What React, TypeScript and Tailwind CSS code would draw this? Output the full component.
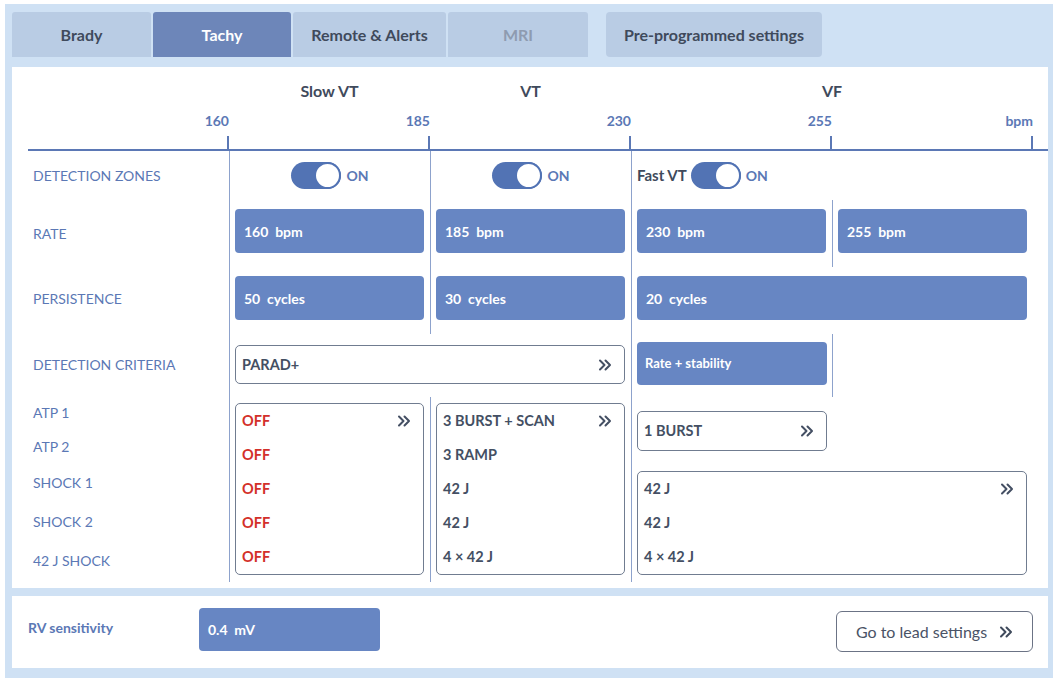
import type { ReactNode } from 'react';

const font = { fontFamily: 'Lato, "Noto Sans", "Liberation Sans", sans-serif' };

function Chevrons({ className = '' }: { className?: string }) {
  return (
    <svg viewBox="0 0 14 12" className={`h-[12px] w-[14px] ${className}`} fill="none" stroke="currentColor" strokeWidth="2" strokeLinecap="round" strokeLinejoin="round">
      <path d="M2 1.5 L6.5 6 L2 10.5" />
      <path d="M7.5 1.5 L12 6 L7.5 10.5" />
    </svg>
  );
}

function Toggle() {
  return (
    <div className="flex items-center gap-[5px]">
      <div className="relative h-[27px] w-[50px] rounded-full bg-[#5273b4]">
        <div className="absolute right-0 top-0 h-[27px] w-[27px] rounded-full border-2 border-[#5273b4] bg-white" />
      </div>
      <span className="text-[14px] font-bold text-[#5b78b5]">ON</span>
    </div>
  );
}

function Filled({ children, small }: { children: ReactNode; small?: boolean }) {
  return (
    <div className={`flex h-[44px] items-center rounded-[4px] bg-[#6786c3] pl-[9px] font-bold text-white ${small ? 'text-[13px]' : 'text-[14px]'}`}>
      {children}
    </div>
  );
}

function OutlineList({ rows, red, chevron = true }: { rows: string[]; red?: boolean; chevron?: boolean }) {
  return (
    <div className="rounded-[5px] border border-[#707c90] bg-white">
      {rows.map((r, i) => (
        <div key={i} className={`flex h-[34px] items-center justify-between pl-[6px] pr-[12px] text-[14.5px] font-bold ${red ? 'text-[#d3302a]' : 'text-[#444f63]'}`}>
          <span>{r}</span>
          {i === 0 && chevron && <Chevrons className="text-[#444f63]" />}
        </div>
      ))}
    </div>
  );
}

const cell = 'border-l border-[#8da2cc]';
const label = 'pl-[5px] text-[14px] text-[#5b78b5]';

export default function App() {
  const tabs = [
    { name: 'Brady', w: 'w-[139px]', cls: 'bg-[#b9cce4] text-[#3f4a5c]' },
    { name: 'Tachy', w: 'w-[138px]', cls: 'bg-[#6d86b9] text-white' },
    { name: 'Remote & Alerts', w: 'w-[153px]', cls: 'bg-[#b9cce4] text-[#3f4a5c]' },
    { name: 'MRI', w: 'w-[140px]', cls: 'bg-[#b9cce4] text-[#8e9bb0]' },
  ];

  return (
    <div className="min-h-screen bg-white pl-[5px] pr-[5px] pt-[4px]" style={font}>
      <div className="flex w-[1048px] flex-col bg-[#cfe1f4] pb-[10px] pl-[7px] pr-[5px] pt-[8px]">
        {/* tabs */}
        <div className="flex h-[45px]">
          <div className="flex gap-[2px]">
            {tabs.map((t) => (
              <div key={t.name} className={`flex items-center justify-center rounded-t-[3px] text-[16px] font-bold ${t.w} ${t.cls}`}>
                {t.name}
              </div>
            ))}
          </div>
          <div className="ml-[18px] flex w-[216px] items-center justify-center rounded-[4px] bg-[#b9cce4] text-[16px] font-bold text-[#3f4a5c]">
            Pre-programmed settings
          </div>
        </div>

        {/* main panel */}
        <div className="mt-[10px] bg-white pb-[6px] pl-[16px] pt-[14px]">
          {/* header */}
          <div className="grid grid-cols-[repeat(5,201px)]">
            <div />
            <div className="text-center text-[16px] font-bold leading-[20px] text-[#3f4a5c]">Slow VT</div>
            <div className="text-center text-[16px] font-bold leading-[20px] text-[#3f4a5c]">VT</div>
            <div className="col-span-2 text-center text-[16px] font-bold leading-[20px] text-[#3f4a5c]">VF</div>

            {['160', '185', '230', '255', 'bpm'].map((n) => (
              <div key={n} className="mt-[11px] text-right text-[14px] font-bold leading-[18px] text-[#5b78b5]">
                {n}
              </div>
            ))}
          </div>
          <div className="mt-[6px] grid h-[15px] grid-cols-[repeat(5,201px)] border-b-2 border-[#5b78b5]">
            {[0, 1, 2, 3, 4].map((i) => (
              <div key={i} className="border-r-2 border-[#5b78b5]" />
            ))}
          </div>

          {/* body */}
          <div className="grid grid-cols-[repeat(5,201px)] grid-rows-[49px_67px_67px_63px_185px]">
            {/* detection zones */}
            <div className={`${label} flex items-center`}>DETECTION ZONES</div>
            <div className={`${cell} flex items-center justify-center`}><Toggle /></div>
            <div className={`${cell} flex items-center justify-center`}><Toggle /></div>
            <div className={`${cell} col-span-2 flex items-center gap-[4px] pl-[5px]`}>
              <span className="text-[15px] font-bold text-[#3f4a5c]">Fast VT</span>
              <Toggle />
            </div>

            {/* rate */}
            <div className={`${label} pt-[23px]`}>RATE</div>
            {['160', '185', '230', '255'].map((r) => (
              <div key={r} className={`${cell} pl-[5px] pr-[6px] pt-[9px]`}>
                <Filled>{r}&nbsp; bpm</Filled>
              </div>
            ))}

            {/* persistence */}
            <div className={`${label} pt-[21px]`}>PERSISTENCE</div>
            <div className={`${cell} pl-[5px] pr-[6px] pt-[9px]`}><Filled>50&nbsp; cycles</Filled></div>
            <div className={`${cell} pl-[5px] pr-[6px] pt-[9px]`}><Filled>30&nbsp; cycles</Filled></div>
            <div className={`${cell} col-span-2 pl-[5px] pr-[6px] pt-[9px]`}><Filled>20&nbsp; cycles</Filled></div>

            {/* detection criteria */}
            <div className={`${label} pt-[20px]`}>DETECTION CRITERIA</div>
            <div className={`${cell} col-span-2 pl-[5px] pr-[6px] pt-[11px]`}>
              <div className="flex h-[39px] items-center justify-between rounded-[5px] border border-[#707c90] pl-[6px] pr-[12px] text-[14.5px] font-bold text-[#444f63]">
                <span>PARAD+</span>
                <Chevrons />
              </div>
            </div>
            <div className={`${cell} pl-[5px] pr-[5px] pt-[8px]`}>
              <div className="flex h-[43px] items-center rounded-[4px] bg-[#6786c3] pl-[8px] text-[13px] font-bold text-white">Rate + stability</div>
            </div>
            <div className={cell} />

            {/* therapies */}
            <div className={`${label} flex flex-col pt-[6px] leading-[20px]`}>
              <span>ATP 1</span>
              <span className="mt-[14px]">ATP 2</span>
              <span className="mt-[16px]">SHOCK 1</span>
              <span className="mt-[19px]">SHOCK 2</span>
              <span className="mt-[19px]">42 J SHOCK</span>
            </div>
            <div className={`${cell} pl-[5px] pr-[6px] pt-[6px]`}>
              <OutlineList rows={['OFF', 'OFF', 'OFF', 'OFF', 'OFF']} red />
            </div>
            <div className={`${cell} pl-[5px] pr-[6px] pt-[6px]`}>
              <OutlineList rows={['3 BURST + SCAN', '3 RAMP', '42 J', '42 J', '4 × 42 J']} />
            </div>
            <div className={`${cell} col-span-2 pl-[5px] pr-[6px] pt-[14px]`}>
              <div className="w-[190px]">
                <div className="flex h-[40px] items-center justify-between rounded-[5px] border border-[#707c90] pl-[6px] pr-[12px] text-[14.5px] font-bold text-[#444f63]">
                  <span>1 BURST</span>
                  <Chevrons />
                </div>
              </div>
              <div className="mt-[20px]">
                <OutlineList rows={['42 J', '42 J', '4 × 42 J']} />
              </div>
            </div>
          </div>
        </div>

        {/* bottom panel */}
        <div className="mt-[8px] flex h-[72px] items-start bg-white pl-[16px] pr-[15px]">
          <div className="mt-[22px] w-[171px] text-[14px] font-bold leading-[20px] text-[#5b78b5]">RV sensitivity</div>
          <div className="mt-[12px] flex h-[43px] w-[181px] items-center rounded-[4px] bg-[#6786c3] pl-[9px] text-[14px] font-bold text-white">
            0.4&nbsp; mV
          </div>
          <div className="ml-auto mt-[15px] flex h-[41px] w-[197px] items-center justify-center gap-[12px] rounded-[6px] border border-[#6b7385] text-[16px] text-[#4a5366]">
            <span>Go to lead settings</span>
            <Chevrons className="text-[#3f4a5c]" />
          </div>
        </div>
      </div>
    </div>
  );
}
